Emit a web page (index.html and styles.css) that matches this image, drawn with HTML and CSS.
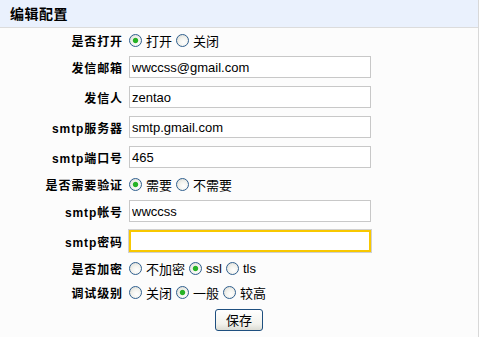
FILE: index.html
```html
<!DOCTYPE html>
<html lang="zh-CN">
<head>
<meta charset="utf-8">
<title>编辑配置</title>
<link rel="stylesheet" href="styles.css">
</head>
<body>
<div class="panel">
  <div class="panel-head">编辑配置</div>
  <form class="form">
    <div class="label">是否打开</div>
    <div class="field radios">
      <label class="opt"><input type="radio" name="turnon" checked>打开</label>
      <label class="opt"><input type="radio" name="turnon">关闭</label>
    </div>

    <div class="label">发信邮箱</div>
    <div class="field"><input class="text" type="text" value="wwccss@gmail.com"></div>

    <div class="label">发信人</div>
    <div class="field"><input class="text" type="text" value="zentao"></div>

    <div class="label">smtp服务器</div>
    <div class="field"><input class="text" type="text" value="smtp.gmail.com"></div>

    <div class="label">smtp端口号</div>
    <div class="field"><input class="text" type="text" value="465"></div>

    <div class="label">是否需要验证</div>
    <div class="field radios">
      <label class="opt"><input type="radio" name="auth" checked>需要</label>
      <label class="opt"><input type="radio" name="auth">不需要</label>
    </div>

    <div class="label">smtp帐号</div>
    <div class="field"><input class="text" type="text" value="wwccss"></div>

    <div class="label">smtp密码</div>
    <div class="field"><input class="text focus" type="password" value=""></div>

    <div class="label">是否加密</div>
    <div class="field radios">
      <label class="opt"><input type="radio" name="secure">不加密</label>
      <label class="opt latin"><input type="radio" name="secure" checked>ssl</label>
      <label class="opt latin"><input type="radio" name="secure">tls</label>
    </div>

    <div class="label">调试级别</div>
    <div class="field radios">
      <label class="opt"><input type="radio" name="debug">关闭</label>
      <label class="opt"><input type="radio" name="debug" checked>一般</label>
      <label class="opt"><input type="radio" name="debug">较高</label>
    </div>

    <div class="actions"><button type="button" class="btn">保存</button></div>
  </form>
</div>
</body>
</html>
```

FILE: styles.css
```css
html, body {
  margin: 0;
  padding: 0;
  background: #ffffff;
}

body {
  font-family: "Liberation Sans", "Noto Sans CJK SC", sans-serif;
  font-size: 12px;
  color: #000;
}

.panel {
  width: 479px;
  height: 337px;
  box-sizing: border-box;
  border-right: 1px solid #d8d8d8;
  background: #fcfcfc;
}

.panel-head {
  height: 27px;
  line-height: 27px;
  padding-left: 10px;
  background: #eaf1fd;
  border-bottom: 1px solid #dcdcdc;
  font-family: "Noto Sans CJK SC", sans-serif;
  font-weight: bold;
  font-size: 14px;
  letter-spacing: 0.5px;
}

.form {
  margin: 0;
  display: grid;
  grid-template-columns: 123px 1fr;
  grid-template-rows: 24px 30px 30px 30px 30px 24px 30px 30px 24px 24px auto;
  column-gap: 6px;
}

.label {
  display: flex;
  align-items: center;
  justify-content: flex-end;
  font-weight: bold;
  font-size: 12px;
  letter-spacing: 0.9px;
  white-space: nowrap;
}

.field {
  display: flex;
  align-items: center;
}

.radios {
  gap: 4px;
}

.opt {
  display: inline-flex;
  align-items: center;
  font-size: 13px;
  font-family: "Noto Sans CJK SC", sans-serif;
}

.opt.latin {
  font-family: "Liberation Sans", sans-serif;
  font-size: 13px;
}

.opt input[type="radio"] {
  -webkit-appearance: none;
  appearance: none;
  width: 13px;
  height: 13px;
  margin: 0 4px 0 0;
  border: 1px solid #2f5f8e;
  border-radius: 50%;
  box-sizing: border-box;
  background: radial-gradient(circle at 60% 65%, #ffffff 0%, #f3f3ee 45%, #d6d6d0 100%);
}

.opt input[type="radio"]:checked {
  background:
    radial-gradient(circle, #27b225 0 2.2px, #8fd48c 2.6px, transparent 3.2px),
    radial-gradient(circle at 60% 65%, #ffffff 0%, #f3f3ee 45%, #d6d6d0 100%);
}

.text {
  width: 242px;
  height: 22px;
  box-sizing: border-box;
  border: 1px solid #c8c8c8;
  background: #fff;
  padding: 0 2px;
  font-family: "Liberation Sans", sans-serif;
  font-size: 13px;
  color: #000;
  margin: 0;
  outline: none;
}

.text.focus {
  border: 2px solid #f8c800;
  box-shadow: 0 0 0 1px #d0d0d0;
}

.actions {
  grid-column: 1 / -1;
  display: flex;
  justify-content: center;
  padding-top: 5px;
}

.btn {
  width: 48px;
  height: 22px;
  padding: 0;
  border: 1px solid #1e4f7f;
  border-radius: 3px;
  background: linear-gradient(#ffffff, #f2f2ec 70%, #dcdcd3);
  font-family: "Noto Sans CJK SC", sans-serif;
  font-size: 13px;
  color: #000;
  line-height: 20px;
}
```
